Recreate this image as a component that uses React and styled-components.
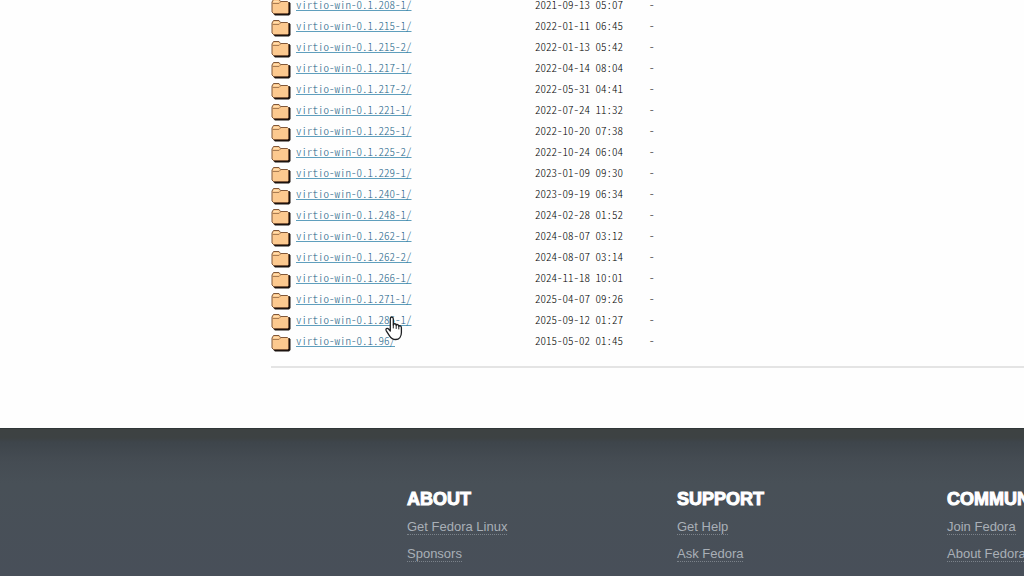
import React from "react";
import styled, { createGlobalStyle } from "styled-components";

const GlobalStyle = createGlobalStyle`
  * { box-sizing: border-box; }
  body {
    margin: 0;
    background: #fefefe;
    font-family: "Liberation Sans", Arial, sans-serif;
    overflow-x: hidden;
  }
`;

const Page = styled.div`
  display: flex;
  flex-direction: column;
  min-height: 100vh;
  overflow: hidden;
`;

const Listing = styled.main`
  padding: 0 0 60px 271px;
`;

const FileTable = styled.table`
  margin-top: -2px;
  border-collapse: collapse;
  font-family: "Noto Sans CJK SC", "Liberation Mono", monospace;
  font-feature-settings: "hwid";
  font-weight: 300;
  font-size: 11px;
  line-height: 12px;
  color: #000;
  white-space: pre;
`;

const Row = styled.tr`
  height: 21px;
`;

const Cell = styled.td`
  padding: 0;
  vertical-align: top;
  width: ${(p) => p.$width}px;
`;

const NameCell = styled(Cell)`
  position: relative;
`;

const DirLink = styled.a`
  color: #1c6488;
  text-decoration: underline 1px #5f9fbd;
  text-underline-offset: 1px;
  text-decoration-skip-ink: none;
`;

const Rule = styled.hr`
  height: 2px;
  margin: 11px 0 0;
  border: 0;
  background: #e4e4e4;
`;

const FolderSvg = styled.svg`
  display: block;
`;

const Pointer = styled.svg`
  position: absolute;
  left: 89px;
  top: 3px;
  z-index: 1;
  pointer-events: none;
`;

const Footer = styled.footer`
  flex: 1;
  padding: 60px 0 12px 407px;
  border-top: 1px solid #303738;
  background: linear-gradient(#3d4242 0, #3d4243 9px, #3e454b 13px, #454c53 32px, #485057 54px, #484f59 100%);
`;

const Columns = styled.div`
  display: grid;
  grid-template-columns: repeat(3, 270px);
`;

const Heading = styled.h3`
  margin: 0 0 3px;
  font-size: 18px;
  line-height: 20px;
  font-weight: 700;
  color: #fff;
  -webkit-text-stroke: 1px #fff;
`;

const LinkList = styled.ul`
  margin: 0;
  padding: 0;
  list-style: none;
`;

const LinkItem = styled.li`
  height: 27px;
  line-height: 27px;
`;

const FooterLink = styled.a`
  font-size: 13px;
  color: #a9afb7;
  text-decoration: none;
  border-bottom: 1px dotted #7b828a;
`;

const entries = [
  ["208-1", "2021-09-13 05:07"],
  ["215-1", "2022-01-11 06:45"],
  ["215-2", "2022-01-13 05:42"],
  ["217-1", "2022-04-14 08:04"],
  ["217-2", "2022-05-31 04:41"],
  ["221-1", "2022-07-24 11:32"],
  ["225-1", "2022-10-20 07:38"],
  ["225-2", "2022-10-24 06:04"],
  ["229-1", "2023-01-09 09:30"],
  ["240-1", "2023-09-19 06:34"],
  ["248-1", "2024-02-28 01:52"],
  ["262-1", "2024-08-07 03:12"],
  ["262-2", "2024-08-07 03:14"],
  ["266-1", "2024-11-18 10:01"],
  ["271-1", "2025-04-07 09:26"],
  ["285-1", "2025-09-12 01:27"],
  ["96", "2015-05-02 01:45"],
];

const groups = [
  ["ABOUT", ["Get Fedora Linux", "Sponsors"]],
  ["SUPPORT", ["Get Help", "Ask Fedora"]],
  ["COMMUNITY", ["Join Fedora", "About Fedora"]],
];

function Folder() {
  return (
    <FolderSvg width="20" height="18" viewBox="0 0 20 18" aria-hidden="true">
      <path d="M4 4H18.5L19.5 5.5V16L18 17.5H4L2 15.5Z" fill="#1b130f" />
      <path d="M1 4L2.5 1.5H8L9.5 3.5H16.5L17.5 4.5V14.5L16.5 15.5H2.5L1 14Z" fill="#fcc98f" stroke="#80583a" />
      <path d="M1.5 5.5H8L9.5 4" fill="none" stroke="#a97c52" />
      <path d="M2.5 3.5H7.5" stroke="#ffe0b0" />
    </FolderSvg>
  );
}

function Hand() {
  return (
    <Pointer width="18" height="25" viewBox="0 0 18 25" aria-hidden="true">
      <path
        d="M5.3 13V3C5.3 .6 8.3 .6 8.3 3V9C8.5 7.2 11 7.4 11.2 9.3C11.6 8 13.7 8.3 13.8 10.3C14.5 9.3 16.4 9.8 16.4 11.8V16.5C16.4 20.5 14.2 23.5 10.7 23.5C7.6 23.5 6 22.2 4.5 19.8L1.3 14.8C.2 12.8 2.2 11.5 3.6 13L5.3 15Z"
        fill="#fff"
        stroke="#1e2023"
        strokeWidth="1.3"
        strokeLinejoin="round"
      />
      <path d="M8.3 9V12M11.2 9.5V12.5M13.8 10.5V13" stroke="#1e2023" strokeLinecap="round" />
    </Pointer>
  );
}

export default function App() {
  return (
    <>
      <GlobalStyle />
      <Page>
        <Listing>
          <FileTable>
            <tbody>
              {entries.map(([version, date]) => (
                <Row key={version}>
                  <Cell $width={25}><Folder /></Cell>
                  <NameCell $width={239}>
                    <DirLink href="#">{`virtio-win-0.1.${version}/`}</DirLink>
                    {version === "285-1" && <Hand />}
                  </NameCell>
                  <Cell $width={114}>{date}</Cell>
                  <Cell $width={10}>-</Cell>
                </Row>
              ))}
            </tbody>
          </FileTable>
          <Rule />
        </Listing>
        <Footer>
          <Columns>
            {groups.map(([title, links]) => (
              <section key={title}>
                <Heading>{title}</Heading>
                <LinkList>
                  {links.map((label) => (
                    <LinkItem key={label}><FooterLink href="#">{label}</FooterLink></LinkItem>
                  ))}
                </LinkList>
              </section>
            ))}
          </Columns>
        </Footer>
      </Page>
    </>
  );
}
